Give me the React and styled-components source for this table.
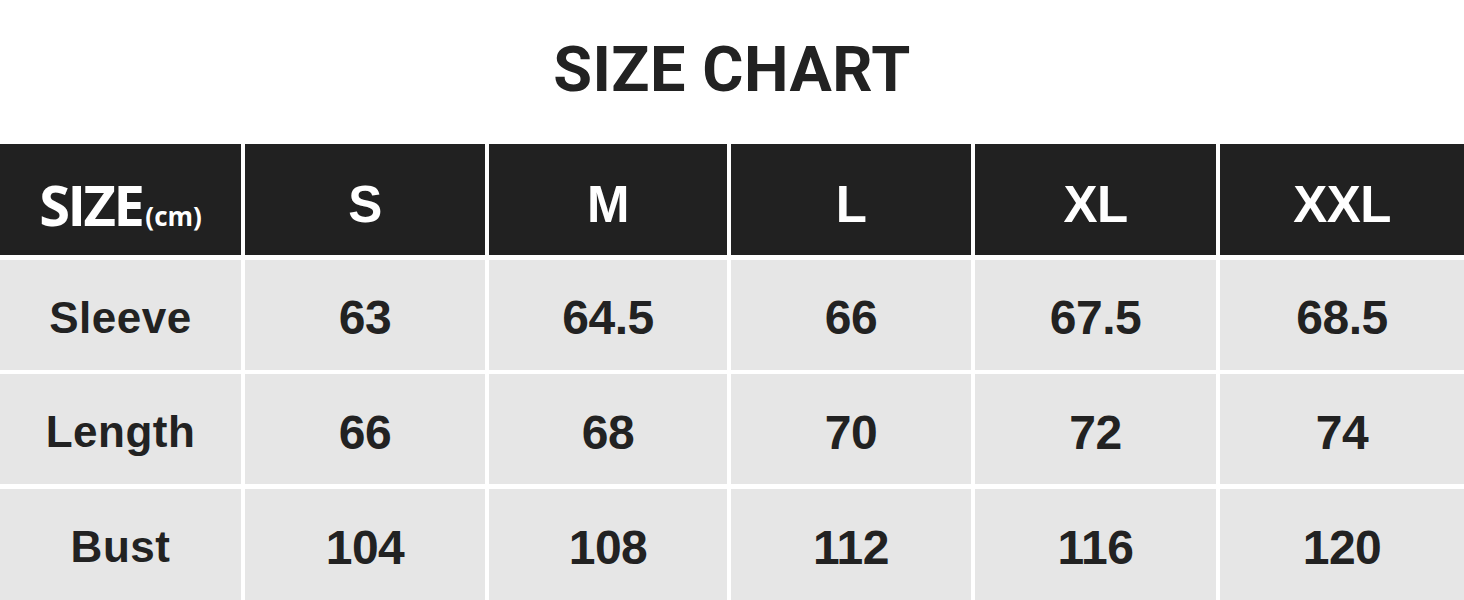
import React from "react";
import styled, { createGlobalStyle } from "styled-components";

const Global = createGlobalStyle`
  html, body { margin: 0; padding: 0; background: #ffffff; }
  body { width: 1464px; height: 600px; overflow: hidden; }
`;

const Page = styled.div`
  width: 1464px;
  height: 600px;
  display: flex;
  flex-direction: column;
  background: #ffffff;
`;

const Title = styled.h1`
  margin: 0;
  height: 144px;
  display: flex;
  align-items: center;
  justify-content: center;
  padding-bottom: 6px;
  box-sizing: border-box;
  font-family: Roboto, "Liberation Sans", sans-serif;
  font-weight: 700;
  font-size: 63px;
  letter-spacing: 0.5px;
  color: #222222;
`;

const Table = styled.div`
  display: grid;
  grid-template-columns: 241px 240px 238px 240px 241px 1fr;
  grid-template-rows: 111px 110px 110px 111px;
  column-gap: 4px;
  row-gap: 4.5px;
`;

const Cell = styled.div`
  display: flex;
  align-items: center;
  justify-content: center;
  padding-top: ${(p) => (p.$head ? "9px" : "6px")};
  box-sizing: border-box;
  background: ${(p) => (p.$head ? "#212121" : "#e6e6e6")};
  color: ${(p) => (p.$head ? "#ffffff" : "#222222")};
  font-family: "Liberation Sans", Arial, sans-serif;
  font-weight: 700;
  font-size: ${(p) => (p.$head ? "51px" : p.$label ? "44px" : "48px")};
  letter-spacing: ${(p) => (p.$label ? "0.5px" : "-0.5px")};
`;

const SizeTitle = styled.span`
  font-family: "Open Sans", "Noto Sans", sans-serif;
  font-weight: 700;
  font-size: 56px;
  letter-spacing: -2.5px;
  display: flex;
  align-items: baseline;
`;

const Unit = styled.span`
  font-size: 26px;
  letter-spacing: 0;
  margin-left: 3px;
`;

const sizes = ["S", "M", "L", "XL", "XXL"];
const rows = [
  { label: "Sleeve", values: ["63", "64.5", "66", "67.5", "68.5"] },
  { label: "Length", values: ["66", "68", "70", "72", "74"] },
  { label: "Bust", values: ["104", "108", "112", "116", "120"] },
];

export default function App() {
  return (
    <Page>
      <Global />
      <Title>SIZE CHART</Title>
      <Table>
        <Cell $head>
          <SizeTitle>
            SIZE<Unit>(cm)</Unit>
          </SizeTitle>
        </Cell>
        {sizes.map((s) => (
          <Cell $head key={s}>
            {s}
          </Cell>
        ))}
        {rows.map((r) => (
          <React.Fragment key={r.label}>
            <Cell $label>{r.label}</Cell>
            {r.values.map((v, i) => (
              <Cell key={i}>{v}</Cell>
            ))}
          </React.Fragment>
        ))}
      </Table>
    </Page>
  );
}
